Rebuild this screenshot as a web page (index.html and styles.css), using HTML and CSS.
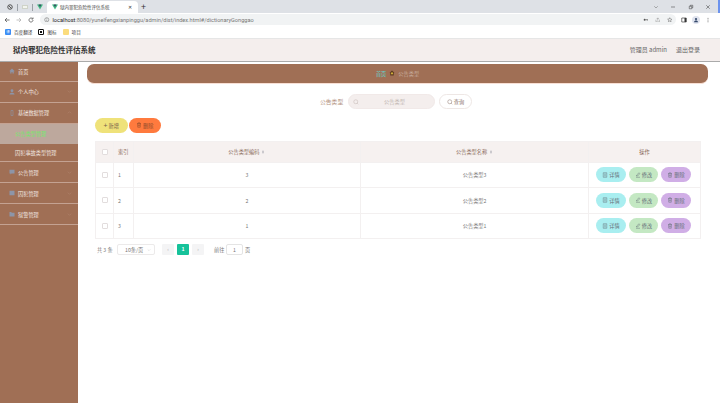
FILE: index.html
```html
<!DOCTYPE html>
<html lang="zh-CN">
<head>
    <meta charset="UTF-8">
    <title>狱内罪犯危险性评估系统</title>
    <link rel="stylesheet" href="styles.css">
</head>
<body>
    <svg class="defs" width="0" height="0">
        <symbol id="i-trash" viewBox="0 0 12 12"><path d="M2 3h8M4.5 3V1.5h3V3M3 3l.5 7.5h5L9 3M5 5v3.5M7 5v3.5" fill="none" stroke="currentColor"/></symbol>
        <symbol id="i-doc" viewBox="0 0 12 12"><path d="M2.5 1.5h7v9h-7zM4.5 4h3M4.5 6h3M4.5 8h3" fill="none" stroke="currentColor"/></symbol>
        <symbol id="i-edit" viewBox="0 0 12 12"><path d="M2 10.5h8M3 8l.3-2L8 1.5 9.8 3.2 5 8z" fill="none" stroke="currentColor"/></symbol>
        <symbol id="i-search" viewBox="0 0 12 12"><circle cx="5.5" cy="5.5" r="4" fill="none" stroke="currentColor"/><path d="M8.5 8.5l2 2" stroke="currentColor"/></symbol>
        <symbol id="i-down" viewBox="0 0 12 12"><path d="M2 4l4 4 4-4" fill="none" stroke="currentColor"/></symbol>
        <symbol id="i-vue" viewBox="0 0 12 12"><path d="M0 1h12L6 11z" fill="#41b883"/><path d="M3 1h6L6 6z" fill="#35495e"/></symbol>
        <symbol id="i-sort" viewBox="0 0 12 12"><path d="M6 1l3 4H3zM6 11L3 7h6z" fill="currentColor"/></symbol>
    </svg>

    <!-- 浏览器标签栏 -->
    <div class="tabstrip">
        <div class="pinned">
            <svg class="pin" viewBox="0 0 12 12"><circle cx="6" cy="6" r="4.5" fill="none" stroke="#555" stroke-width="2"/><path d="M3 3l6 6" stroke="#555" stroke-width="2"/></svg>
            <span class="sep"></span>
            <span class="pin-box"></span>
            <span class="sep"></span>
            <svg class="pin"><use href="#i-vue"/></svg>
        </div>
        <div class="tab">
            <svg class="pin"><use href="#i-vue"/></svg>
            <span class="tab-title">狱内罪犯危险性评估系统</span>
            <span class="tab-close">✕</span>
        </div>
        <span class="tab-new">+</span>
        <div class="win-btns">
            <svg viewBox="0 0 12 12"><path d="M2.5 4.5L6 8l3.5-3.5" fill="none" stroke="#666"/></svg>
            <svg viewBox="0 0 12 12"><path d="M2 6h8" stroke="#333"/></svg>
            <svg viewBox="0 0 12 12"><path d="M2.5 4.5h5v5h-5zM4.5 4.5v-2h5v5h-2" fill="none" stroke="#333"/></svg>
            <svg viewBox="0 0 12 12"><path d="M2.5 2.5l7 7M9.5 2.5l-7 7" stroke="#333"/></svg>
        </div>
        <span class="win-edge"></span>
    </div>

    <!-- 地址栏 -->
    <div class="toolbar">
        <svg class="nav-ico" viewBox="0 0 12 12"><path d="M11 6H2M6 2L2 6l4 4" fill="none" stroke="#444" stroke-width="1.4"/></svg>
        <svg class="nav-ico" viewBox="0 0 12 12"><path d="M1 6h9M6 2l4 4-4 4" fill="none" stroke="#aaa" stroke-width="1.4"/></svg>
        <svg class="nav-ico" viewBox="0 0 12 12"><path d="M10 6a4 4 0 1 1-1.2-2.8M10 1v3H7" fill="none" stroke="#444" stroke-width="1.4"/></svg>
        <div class="url-bar">
            <svg class="url-ico" viewBox="0 0 12 12"><circle cx="6" cy="6" r="4.5" fill="none" stroke="#555"/><path d="M6 5.5V9M6 3v1.2" stroke="#555"/></svg>
            <span class="url"><b>localhost</b>:8080/yunelfengxianpinggu/admin/dist/index.html#/dictionaryGonggao</span>
            <svg class="url-ico" viewBox="0 0 12 12"><circle cx="3.5" cy="6" r="2" fill="#555"/><path d="M5 6h6v2" fill="none" stroke="#555" stroke-width="1.6"/></svg>
            <svg class="url-ico" viewBox="0 0 12 12"><path d="M2 6v4.5h8V6M6 8V2M6 2L3.5 4.5M6 2l2.5 2.5" fill="none" stroke="#888"/></svg>
            <svg class="url-ico" viewBox="0 0 12 12"><path d="M6 1.5l1.4 3 3.2.4-2.4 2.2.7 3.2L6 8.7l-2.9 1.6.7-3.2L1.4 4.9l3.2-.4z" fill="none" stroke="#555"/></svg>
        </div>
        <svg class="bar-ico" viewBox="0 0 12 12"><path d="M1.5 2h9v8h-9z" fill="none" stroke="#333" stroke-width="1.3"/><path d="M7 2h3.5v8H7z" fill="#333"/></svg>
        <span class="avatar"><svg viewBox="0 0 12 12"><circle cx="6" cy="4.2" r="2.2" fill="#35496b"/><path d="M2 10.5c0-5 8-5 8 0z" fill="#35496b"/></svg></span>
        <svg class="bar-ico menu-ico" viewBox="0 0 12 12"><circle cx="6" cy="2.5" r="1" fill="#666"/><circle cx="6" cy="6" r="1" fill="#666"/><circle cx="6" cy="9.5" r="1" fill="#666"/></svg>
    </div>

    <!-- 书签栏 -->
    <div class="bookmarks">
        <span class="bm"><i class="bm-ico bm-blue">译</i>百度翻译</span>
        <span class="bm"><i class="bm-ico bm-dark"></i>图标</span>
        <span class="bm"><i class="bm-ico bm-folder"></i>项目</span>
    </div>

    <!-- 顶部导航栏 -->
    <div class="header">
        <div class="sys-title">狱内罪犯危险性评估系统</div>
        <div class="user-info">
            <span>管理员 admin</span>
            <span>退出登录</span>
        </div>
    </div>

    <div class="layout">
        <!-- 左侧菜单 -->
        <div class="sidebar">
            <div class="menu-item first">
                <svg class="menu-ico-l" viewBox="0 0 12 12"><path d="M6 1L.5 6.5H2.5V11h2.5V8h2v3h2.5V6.5h2z"/></svg>
                <span>首页</span>
            </div>
            <div class="menu-item">
                <svg class="menu-ico-l" viewBox="0 0 12 12"><circle cx="6" cy="3.5" r="2.8"/><path d="M1 11c0-5 10-5 10 0z"/></svg>
                <span>个人中心</span>
                <svg class="chev"><use href="#i-down"/></svg>
            </div>
            <div class="menu-item open">
                <svg class="menu-ico-l" viewBox="0 0 12 12"><path d="M4 1h4v10H4z" fill="none" stroke="#8d95a8" stroke-width="1.2"/></svg>
                <span>基础数据管理</span>
                <svg class="chev chev-up"><use href="#i-down"/></svg>
            </div>
            <div class="sub-item active">公告类型管理</div>
            <div class="sub-item">囚犯事故类型管理</div>
            <div class="menu-item">
                <svg class="menu-ico-l" viewBox="0 0 12 12"><path d="M1 1.5h10v7.5H5L3 11V9H1z"/></svg>
                <span>公告管理</span>
                <svg class="chev"><use href="#i-down"/></svg>
            </div>
            <div class="menu-item">
                <svg class="menu-ico-l" viewBox="0 0 12 12"><path d="M1 1.5h10v9H1z"/></svg>
                <span>囚犯管理</span>
                <svg class="chev"><use href="#i-down"/></svg>
            </div>
            <div class="menu-item">
                <svg class="menu-ico-l" viewBox="0 0 12 12"><path d="M1 2h4v1.5h6V11H1z"/></svg>
                <span>狱警管理</span>
                <svg class="chev"><use href="#i-down"/></svg>
            </div>
        </div>

        <!-- 主内容 -->
        <div class="main">
            <div class="crumb">
                <span class="crumb-home">首页</span>
                <svg class="crumb-ico" viewBox="0 0 12 12"><path d="M6 1L1 5.5h1.5V11h7V5.500H11z" fill="#5c3a1e"/><rect x="4.500" y="5" width="3" height="3.500" fill="#f5d442"/></svg>
                <span class="crumb-cur">公告类型</span>
            </div>

            <div class="search-row">
                <span class="search-label">公告类型</span>
                <div class="search-input">
                    <svg class="ico"><use href="#i-search"/></svg>
                    <span>公告类型</span>
                </div>
                <button class="btn-search"><svg class="ico"><use href="#i-search"/></svg>查询</button>
            </div>

            <div class="actions">
                <button class="btn btn-add"><span class="plus">+</span>新增</button>
                <button class="btn btn-del"><svg class="ico"><use href="#i-trash"/></svg>删除</button>
            </div>

            <table class="grid">
                <colgroup>
                    <col class="col-check">
                    <col class="col-index">
                    <col>
                    <col>
                    <col class="col-op">
                </colgroup>
                <thead>
                    <tr>
                        <th><span class="check"></span></th>
                        <th>索引</th>
                        <th>公告类型编码<svg class="sort"><use href="#i-sort"/></svg></th>
                        <th>公告类型名称<svg class="sort"><use href="#i-sort"/></svg></th>
                        <th>操作</th>
                    </tr>
                </thead>
                <tbody>
                    <tr>
                        <td><span class="check"></span></td>
                        <td class="left">1</td>
                        <td>3</td>
                        <td>公告类型3</td>
                        <td>
                            <div class="row-btns">
                                <button class="rbtn rbtn-info"><svg class="ico"><use href="#i-doc"/></svg>详情</button>
                                <button class="rbtn rbtn-edit"><svg class="ico"><use href="#i-edit"/></svg>修改</button>
                                <button class="rbtn rbtn-del"><svg class="ico"><use href="#i-trash"/></svg>删除</button>
                            </div>
                        </td>
                    </tr>
                    <tr>
                        <td><span class="check"></span></td>
                        <td class="left">2</td>
                        <td>2</td>
                        <td>公告类型2</td>
                        <td>
                            <div class="row-btns">
                                <button class="rbtn rbtn-info"><svg class="ico"><use href="#i-doc"/></svg>详情</button>
                                <button class="rbtn rbtn-edit"><svg class="ico"><use href="#i-edit"/></svg>修改</button>
                                <button class="rbtn rbtn-del"><svg class="ico"><use href="#i-trash"/></svg>删除</button>
                            </div>
                        </td>
                    </tr>
                    <tr>
                        <td><span class="check"></span></td>
                        <td class="left">3</td>
                        <td>1</td>
                        <td>公告类型1</td>
                        <td>
                            <div class="row-btns">
                                <button class="rbtn rbtn-info"><svg class="ico"><use href="#i-doc"/></svg>详情</button>
                                <button class="rbtn rbtn-edit"><svg class="ico"><use href="#i-edit"/></svg>修改</button>
                                <button class="rbtn rbtn-del"><svg class="ico"><use href="#i-trash"/></svg>删除</button>
                            </div>
                        </td>
                    </tr>
                </tbody>
            </table>

            <div class="pager">
                <span class="pg-total">共 3 条</span>
                <span class="pg-size">10条/页<svg class="ico"><use href="#i-down"/></svg></span>
                <span class="pg-btn">‹</span>
                <span class="pg-btn pg-on">1</span>
                <span class="pg-btn">›</span>
                <span class="pg-go">前往</span>
                <span class="pg-input">1</span>
                <span>页</span>
            </div>
        </div>
    </div>
</body>
</html>
```

FILE: styles.css
```css
/* 基础样式 */
* {
    box-sizing: border-box;
}

html, body {
    height: 100%;
}

body {
    margin: 0;
    display: flex;
    flex-direction: column;
    overflow: hidden;
    font-family: "Noto Sans CJK SC", "Liberation Sans", sans-serif;
    font-size: 5.2px;
    color: #666;
    background: #fff;
}

.defs {
    position: absolute;
}

button {
    font-family: inherit;
    border: none;
    padding: 0;
}

.ico {
    width: 6px;
    height: 6px;
    flex: none;
}

/* 标签栏 */
.tabstrip {
    display: flex;
    align-items: flex-end;
    height: 13px;
    background: #dee1e6;
    flex: none;
}

.pinned {
    display: flex;
    align-items: center;
    gap: 4px;
    width: 47px;
    height: 12px;
    padding-left: 7px;
}

.pin {
    width: 6px;
    height: 6px;
    flex: none;
}

.pin-box {
    width: 6px;
    height: 4px;
    background: #f3f5ee;
    border: 1px solid #cfd3c8;
}

.sep {
    width: 1px;
    height: 7px;
    background: #9aa0a6;
}

.tab {
    display: flex;
    align-items: center;
    width: 91px;
    height: 12px;
    padding: 0 6px 0 5px;
    background: #fff;
    border-radius: 4px 4px 0 0;
}

.tab-title {
    flex: 1;
    margin-left: 2px;
    font-size: 4.5px;
    color: #444;
}

.tab-close {
    font-size: 4.5px;
    color: #333;
}

.tab-new {
    margin: 0 0 0 3px;
    height: 12px;
    font-size: 9px;
    line-height: 12px;
    color: #333;
}

.win-btns {
    display: flex;
    gap: 11.5px;
    margin-left: auto;
    margin-right: 7px;
    height: 12px;
    align-items: center;
}

.win-btns svg {
    width: 6px;
    height: 6px;
}

.win-edge {
    width: 2px;
    height: 13px;
    background: #6c93ee;
}

/* 地址栏 */
.toolbar {
    display: flex;
    align-items: center;
    height: 13px;
    padding-left: 4px;
    background: #fff;
    flex: none;
}

.nav-ico {
    width: 6px;
    height: 6px;
    margin-right: 6px;
    flex: none;
}

.url-bar {
    display: flex;
    align-items: center;
    gap: 6.5px;
    width: 636px;
    height: 11px;
    padding: 0 4px;
    background: #f1f3f4;
    border-radius: 6px;
}

.url-ico {
    width: 5.5px;
    height: 5.5px;
    flex: none;
}

.url {
    flex: 1;
    margin-left: -3.5px;
    font-family: "Roboto", "Liberation Sans", sans-serif;
    font-size: 5.6px;
    color: #777;
}

.url b {
    font-weight: 400;
    color: #222;
}

.bar-ico {
    width: 6px;
    height: 6px;
    margin-left: 5px;
    flex: none;
}

.avatar {
    display: flex;
    align-items: center;
    justify-content: center;
    width: 8px;
    height: 8px;
    margin-left: 5px;
    border-radius: 50%;
    background: #dfe3ee;
}

.avatar svg {
    width: 6px;
    height: 6px;
}

.menu-ico {
    margin-left: 5px;
}

/* 书签栏 */
.bookmarks {
    display: flex;
    align-items: center;
    gap: 6px;
    height: 12.5px;
    padding-left: 5px;
    background: #fff;
    border-bottom: 1px solid #e6e6e6;
    flex: none;
    font-size: 4.6px;
    color: #444;
}

.bm {
    display: flex;
    align-items: center;
    gap: 3px;
}

.bm-ico {
    display: block;
    width: 6px;
    height: 6px;
    border-radius: 1px;
    font-style: normal;
    font-size: 3.5px;
    line-height: 6px;
    text-align: center;
    color: #fff;
}

.bm-blue {
    background: #3a8df5;
}

.bm-dark {
    background: #111;
    border: 1px solid #111;
    box-shadow: inset 0 0 0 1px #fff;
}

.bm-folder {
    background: #fbdc7d;
}

/* 顶部导航栏 */
.header {
    display: flex;
    align-items: center;
    justify-content: space-between;
    height: 23px;
    padding: 0 20px 0 13px;
    background: #f4eeed;
    border-bottom: 1px solid #aaa;
    flex: none;
}

.sys-title {
    font-size: 7.5px;
    font-weight: 700;
    color: #333;
}

.user-info {
    display: flex;
    gap: 9px;
    font-size: 6px;
    color: #666;
}

.layout {
    display: flex;
    flex: 1;
    min-height: 0;
}

/* 左侧菜单 */
.sidebar {
    width: 78px;
    background: #a06f55;
    flex: none;
    color: #f1e6e0;
}

.menu-item {
    display: flex;
    align-items: center;
    height: 21px;
    padding: 0 6px 0 9px;
    border-bottom: 1px solid #c4a292;
}

.menu-item.first {
    height: 20px;
}

.menu-ico-l {
    width: 6px;
    height: 6px;
    margin-right: 3px;
    fill: #8d95a8;
    flex: none;
}

.chev {
    width: 5px;
    height: 5px;
    margin-left: auto;
    color: #b98f7a;
}

.chev-up {
    transform: rotate(180deg);
}

.sub-item {
    height: 18.5px;
    padding-left: 15px;
    line-height: 18.5px;
    border-bottom: 1px solid #c4a292;
}

.sub-item.active {
    height: 20px;
    line-height: 20px;
    color: #72e86a;
    background: #bda89d;
    border-bottom: none;
}

/* 主内容 */
.main {
    flex: 1;
    min-width: 0;
}

.crumb {
    display: flex;
    align-items: center;
    justify-content: center;
    gap: 3px;
    height: 20px;
    margin: 2px 12px 0 9px;
    background: #a06f55;
    border-bottom: 1px solid #f8dfd4;
    border-radius: 7px;
}

.crumb-home {
    color: #63d4d0;
}

.crumb-ico {
    width: 6px;
    height: 6px;
}

.crumb-cur {
    color: #c7ad9f;
}

.search-row {
    display: flex;
    align-items: center;
    justify-content: center;
    margin-top: 10px;
    padding-right: 6px;
    height: 16px;
}

.search-label {
    width: 28px;
    font-size: 5.8px;
    color: #b3937f;
}

.search-input {
    display: flex;
    align-items: center;
    width: 87px;
    height: 15px;
    padding: 0 4px;
    border-radius: 8px;
    background: #f4eeed;
    border: 1px solid #f1e9e8;
    color: #c0b4b0;
}

.search-input span {
    flex: 1;
    text-align: center;
}

.btn-search {
    display: flex;
    align-items: center;
    justify-content: center;
    gap: 1px;
    width: 33px;
    height: 15px;
    margin-left: 4px;
    border-radius: 8px;
    background: #fff;
    border: 1px solid #eee7e5;
    font-size: 5.2px;
    color: #8a7268;
}

.actions {
    display: flex;
    gap: 1px;
    margin: 8px 0 0 17px;
}

.btn {
    display: flex;
    align-items: center;
    justify-content: center;
    gap: 1px;
    width: 32.5px;
    height: 15px;
    border-radius: 8px;
    font-size: 5.2px;
    color: #77604a;
}

.btn-add {
    background: #efe27a;
}

.btn-del {
    background: #ff7a3e;
    color: #8b4a2b;
}

.plus {
    font-size: 7px;
    line-height: 7px;
}

/* 表格 */
.grid {
    width: 606px;
    margin: 8px 0 0 17px;
    border-collapse: collapse;
    table-layout: fixed;
    border: 1px solid #f1eeee;
}

.col-check {
    width: 18px;
}

.col-index {
    width: 19.5px;
}

.col-op {
    width: 112px;
}

.grid th, .grid td {
    padding: 0;
    text-align: center;
    border: 1px solid #f3f0f0;
    font-weight: 400;
}

.grid th {
    height: 21px;
    background: #f6f1f0;
    color: #8a6a5a;
}

.grid td {
    height: 25.5px;
    color: #777;
}

.grid td.left {
    padding-left: 4px;
    text-align: left;
}

.check {
    display: block;
    width: 6px;
    height: 6px;
    margin: 0 auto;
    border: 1px solid #e2dddd;
    border-radius: 1px;
    background: #fff;
}

.sort {
    width: 4px;
    height: 4px;
    margin-left: 2px;
    color: #a9a9b3;
}

.row-btns {
    display: flex;
    justify-content: center;
    gap: 3px;
    padding-right: 2px;
}

.rbtn {
    display: flex;
    align-items: center;
    justify-content: center;
    gap: 1px;
    width: 29.5px;
    height: 15px;
    border-radius: 8px;
    font-size: 5.2px;
    color: #66707a;
}

.rbtn-info {
    background: #a9eef0;
}

.rbtn-edit {
    background: #c4e8c3;
}

.rbtn-del {
    background: #d0aee6;
}

/* 分页 */
.pager {
    display: flex;
    align-items: center;
    margin: 5px 0 0 19px;
    height: 11px;
    color: #777;
}

.pg-total {
    width: 20px;
}

.pg-size {
    display: flex;
    align-items: center;
    justify-content: space-between;
    width: 38px;
    height: 11px;
    margin-right: 7px;
    padding: 0 3px 0 7px;
    border: 1px solid #eceaea;
    border-radius: 2px;
}

.pg-size .ico {
    width: 4px;
    height: 4px;
    color: #bbb;
}

.pg-btn {
    width: 12px;
    height: 11px;
    margin-right: 3px;
    line-height: 10px;
    text-align: center;
    background: #f4f4f5;
    color: #aaa;
    border-radius: 1px;
}

.pg-on {
    background: #16c29a;
    color: #fff;
    font-weight: 700;
}

.pg-go {
    margin-left: 7px;
    width: 12px;
}

.pg-input {
    width: 17px;
    height: 11px;
    margin-right: 2px;
    line-height: 9px;
    text-align: center;
    border: 1px solid #e4e4e4;
    border-radius: 2px;
}
```
